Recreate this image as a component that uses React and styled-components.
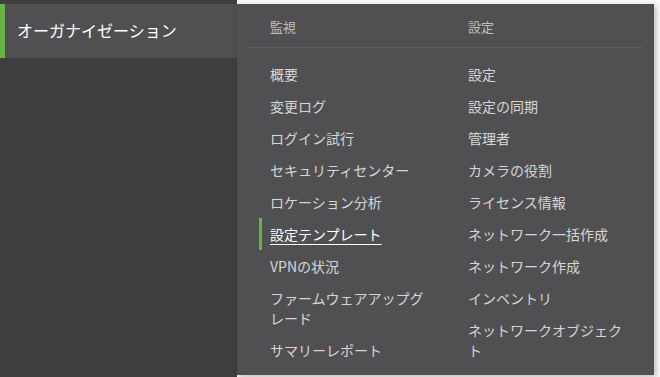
import React from "react";
import styled, { createGlobalStyle } from "styled-components";

const GlobalStyle = createGlobalStyle`
  html, body {
    margin: 0;
    padding: 0;
    background: #fafafa;
    font-family: "Noto Sans CJK JP", "Noto Sans", sans-serif;
    overflow: hidden;
  }
`;

const monitor = [
  "概要",
  "変更ログ",
  "ログイン試行",
  "セキュリティセンター",
  "ロケーション分析",
  "設定テンプレート",
  "VPNの状況",
  "ファームウェアアップグレード",
  "サマリーレポート",
];

const settings = [
  "設定",
  "設定の同期",
  "管理者",
  "カメラの役割",
  "ライセンス情報",
  "ネットワーク一括作成",
  "ネットワーク作成",
  "インベントリ",
  "ネットワークオブジェクト",
];

export default function App() {
  return (
    <>
      <GlobalStyle />
      <Page>
        <Sidebar>
          <NavRow active>オーガナイゼーション</NavRow>
        </Sidebar>
        <Menu>
          <Headings>
            <Heading>監視</Heading>
            <Heading>設定</Heading>
          </Headings>
          <Divider />
          <Columns>
            <Column>
              {monitor.map((label) => (
                <Item key={label} active={label === "設定テンプレート"}>
                  <span>{label}</span>
                </Item>
              ))}
            </Column>
            <Column>
              {settings.map((label) => (
                <Item key={label}>
                  <span>{label}</span>
                </Item>
              ))}
            </Column>
          </Columns>
        </Menu>
      </Page>
    </>
  );
}

const Page = styled.div`
  position: relative;
  width: 660px;
  height: 377px;
  background: #fafafa;
`;

const Sidebar = styled.nav`
  width: 237px;
  height: 100%;
  background: #3d3e40;
  padding-top: 4px;
  box-sizing: border-box;
`;

const NavRow = styled.div`
  height: 54px;
  display: flex;
  align-items: center;
  padding-left: 12px;
  padding-bottom: 2px;
  box-sizing: border-box;
  font-size: 16px;
  color: #ffffff;
  background: ${(p) => (p.active ? "#505052" : "transparent")};
  border-left: 5px solid ${(p) => (p.active ? "#67b346" : "transparent")};
`;

const Menu = styled.div`
  position: absolute;
  left: 237px;
  top: 4px;
  width: 417px;
  height: 371px;
  background: #505052;
  box-shadow: 2px 2px 6px rgba(0, 0, 0, 0.25);
  padding: 0 0 0 22px;
  box-sizing: border-box;
`;

const Headings = styled.div`
  display: grid;
  grid-template-columns: 198px 198px;
  padding-top: 13px;
  height: 43px;
  box-sizing: border-box;
`;

const Heading = styled.div`
  padding-left: 11px;
  font-size: 13px;
  line-height: 20px;
  color: #bdbdbd;
`;

const Divider = styled.div`
  height: 1px;
  background: #5d5d5f;
  margin: 0 11px 0 -11px;
`;

const Columns = styled.div`
  display: grid;
  grid-template-columns: 198px 198px;
  padding-top: 10px;
`;

const Column = styled.div`
  display: flex;
  flex-direction: column;
`;

const Item = styled.div`
  padding: 6px 27px 6px 8px;
  border-left: 3px solid ${(p) => (p.active ? "#67b346" : "transparent")};
  font-size: 14px;
  line-height: 20px;
  color: ${(p) => (p.active ? "#ffffff" : "#d6d6d6")};

  span {
    text-decoration: ${(p) => (p.active ? "underline" : "none")};
    text-underline-offset: 4px;
    text-decoration-thickness: 1px;
  }
`;
